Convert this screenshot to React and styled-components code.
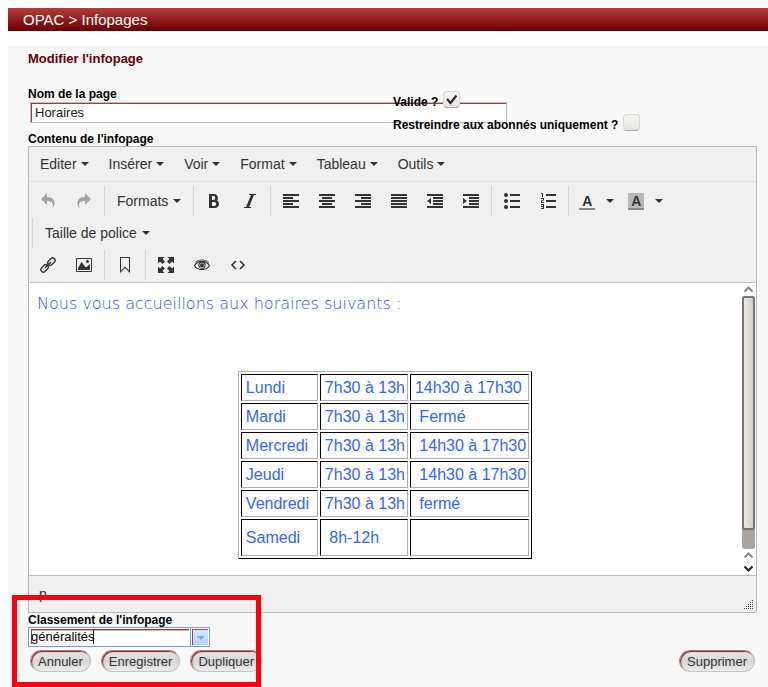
import React from "react";
import styled, { createGlobalStyle } from "styled-components";
import { ImBold, ImItalic, ImUndo2, ImRedo2, ImImage, ImListNumbered } from "react-icons/im";

const GlobalStyle = createGlobalStyle`
  * { box-sizing: border-box; }
  body {
    margin: 0;
    background: #fff;
    color: #000;
    font-family: "Liberation Sans", Arial, sans-serif;
    font-size: 13px;
  }
  button, input { font-family: inherit; }
`;

const Page = styled.div`
  position: relative;
  padding: 8px 0 0 8px;
`;

const TopBar = styled.header`
  height: 23px;
  padding-left: 15px;
  background: linear-gradient(#b43c3c, #6a0000);
  color: #fff;
  font-size: 15px;
  line-height: 23px;
`;

const Panel = styled.main`
  margin-top: 15px;
  padding: 4px 11px 16px 20px;
  background: #f8f8f8;
`;

const Title = styled.h1`
  margin: 0 0 20px;
  color: #6a0000;
  font-size: 13px;
  line-height: 17px;
`;

const FieldLabel = styled.label`
  display: block;
  font-size: 12px;
  font-weight: bold;
  line-height: 14px;
`;

const NameRow = styled.div`
  position: relative;
  margin-bottom: 9px;
`;

const NameInput = styled.input`
  display: block;
  width: 477px;
  height: 21px;
  margin: 1px 0 0 2px;
  padding: 0 4px;
  border: 1px solid #c0c0c0;
  box-shadow: inset 1px 1px 0 #9a3a3e;
  background: #fff;
  color: #222;
  font-size: 13px;
`;

const Options = styled.div`
  position: absolute;
  top: 4px;
  left: 365px;
  display: grid;
  gap: 5px;
`;

const Option = styled.label`
  display: flex;
  align-items: flex-end;
  gap: 5px;
  height: 18px;
  font-size: 12px;
  font-weight: bold;
  line-height: 14px;
`;

const CheckSlot = styled.span`
  display: grid;
  align-self: flex-start;

  > * { grid-area: 1 / 1; }
  svg { pointer-events: none; }
`;

const CheckInput = styled.input`
  appearance: none;
  width: 17px;
  height: 17px;
  margin: 0;
  border: 1px solid #d8d5d2;
  border-bottom-color: #aaa6a2;
  border-radius: 4px;
  background: linear-gradient(#f6f5f3, #e6e4e1);
`;

const Editor = styled.section`
  border: 1px solid #bbb;
  background: #f0f0f0;
  color: #333;
`;

const MenuBar = styled.div`
  display: flex;
  height: 35px;
  padding: 0 1px;
  border-bottom: 1px solid #e0e0e0;
`;

const TextButton = styled.button`
  display: flex;
  align-items: center;
  gap: 4px;
  padding: 0 10px;
  border: 0;
  background: none;
  color: #333;
  font-size: 14px;
  white-space: nowrap;
`;

const ToolTextButton = styled(TextButton)`
  gap: 5px;
`;

const ToolBars = styled.div`
  display: grid;
  gap: 2px;
  padding: 4px 1px 2px;
  border-bottom: 1px solid #c4c4c4;
`;

const ToolRow = styled.div`
  display: flex;
  height: 30px;
`;

const ToolGroup = styled.div`
  display: flex;
  ${(p) => p.$divided && "margin-left: 2px; padding-left: 2px; border-left: 1px solid #d6d6d6;"}
`;

const IconButton = styled.button`
  display: flex;
  align-items: center;
  justify-content: center;
  width: ${(p) => p.$width || 36}px;
  padding: 0;
  border: 0;
  background: none;
  color: #333;
  opacity: ${(p) => (p.disabled ? 0.4 : 1)};
`;

const Split = styled.div`
  display: flex;
  margin-right: 3px;
`;

const ColorLetter = styled.span`
  width: 16px;
  height: 17px;
  border-bottom: 2px solid #888;
  background: ${(p) => p.$fill};
  font-size: 14px;
  font-weight: bold;
  line-height: 16px;
  text-align: center;
`;

const EditArea = styled.div`
  display: flex;
  height: 292px;
  background: #fff;
`;

const Document = styled.div`
  flex: 1;
  min-width: 0;
  padding: 8px;
  color: #36f;
  outline: none;
`;

const Intro = styled.p`
  margin: 0 0 55px;
  color: #1f55ff;
  font-family: "DejaVu Sans Light", "DejaVu Sans", sans-serif;
  font-size: 16px;
  font-weight: 200;
  line-height: 25px;
`;

const Schedule = styled.table`
  margin: 0 auto;
  border: 1px solid;
  border-color: #b0b0b0 #000 #000 #b0b0b0;
  border-spacing: 2px;
  font-size: 16px;
  line-height: 17px;
`;

const Cell = styled.td`
  height: ${(p) => (p.$tall ? 37 : 27)}px;
  padding: 4px 2px 4px 4px;
  border: 1px solid;
  border-color: #000 #b0b0b0 #b0b0b0 #000;
  white-space: pre;
`;

const DayCell = styled(Cell)`
  width: 77px;
`;

const ScrollBar = styled.div`
  display: flex;
  flex-direction: column;
  align-items: center;
  width: 15px;
  flex: none;
`;

const ScrollTrack = styled.div`
  flex: 1;
  width: 13px;
  padding-bottom: 19px;
  border-radius: 3px;
  background: #aaa4a0;
`;

const ScrollThumb = styled.div`
  height: 100%;
  border: 2px solid #7a736f;
  border-radius: 3px;
  background: linear-gradient(90deg, #eae7e4, #d3cfcb);
`;

const StatusBar = styled.footer`
  display: flex;
  align-items: flex-end;
  justify-content: space-between;
  height: 37px;
  padding: 2px 2px 2px 10px;
  border-top: 1px solid #bbb;
  font-size: 14px;
`;

const PathName = styled.span`
  align-self: center;
`;

const Combo = styled.div`
  display: flex;
  width: 182px;
  height: 20px;
  border: 1px solid #7a9fc8;
  background: #fff;
`;

const ComboInput = styled.input`
  flex: 1;
  min-width: 0;
  margin: 1px 1px 2px 2px;
  padding: 0;
  border: 0;
  outline: none;
  box-shadow: inset 1px 1px 0 #8a3a3a, inset 0 2px 0 #dfb0b0;
  font-size: 13px;
`;

const ComboText = styled.div`
  position: relative;
  display: flex;
  flex: 1;
  min-width: 0;
`;

const TextCaret = styled.span`
  position: absolute;
  top: 2px;
  left: 64px;
  width: 1px;
  height: 14px;
  background: #000;
`;

const ComboButton = styled.button`
  display: flex;
  align-items: center;
  justify-content: center;
  width: 19px;
  padding: 1px;
  border: 0;
  border-left: 1px solid #7a9fc8;
  background: #fff;
`;

const ComboFace = styled.span`
  display: flex;
  align-items: center;
  justify-content: center;
  width: 100%;
  height: 100%;
  border: solid #8a4a56;
  border-width: 1px 0 0 1px;
  background: linear-gradient(#d4e8fd, #b0d4fa);
  color: #8aa4cc;
`;

const Actions = styled.div`
  display: flex;
  gap: 10px;
  margin: 3px 2px 0;
`;

const ActionButton = styled.button`
  height: 22px;
  padding: 0 7px;
  border: 1px solid #c4c4c4;
  border-top-color: #b07878;
  border-left-color: #b49090;
  border-radius: 11px;
  box-shadow: inset 1px 1px 1px #7a2020;
  background: linear-gradient(#e8e8e8, #d6d6d6 50%, #ececec);
  color: #333;
  font-size: 13px;
  margin-left: ${(p) => (p.$end ? "auto" : "0")};
`;

const Highlight = styled.div`
  position: absolute;
  bottom: 1px;
  left: 12px;
  width: 249px;
  height: 92px;
  border: 5px solid #ff0010;
  pointer-events: none;
`;

const Caret = () => (
  <svg width="8" height="4" viewBox="0 0 8 4" fill="currentColor" aria-hidden="true">
    <path d="M0 0h8L4 4z" />
  </svg>
);

const Glyph = ({ children }) => (
  <svg width="16" height="16" viewBox="0 0 16 16" fill="currentColor" aria-hidden="true">
    {children}
  </svg>
);

const Left = () => <Glyph><path d="M0 1h16v2H0zM0 4h10v2H0zM0 7h16v2H0zM0 10h10v2H0zM0 13h16v2H0z" /></Glyph>;
const Center = () => <Glyph><path d="M0 1h16v2H0zM3 4h10v2H3zM0 7h16v2H0zM3 10h10v2H3zM0 13h16v2H0z" /></Glyph>;
const Right = () => <Glyph><path d="M0 1h16v2H0zM6 4h10v2H6zM0 7h16v2H0zM6 10h10v2H6zM0 13h16v2H0z" /></Glyph>;
const Justify = () => <Glyph><path d="M0 1h16v2H0zM0 4h16v2H0zM0 7h16v2H0zM0 10h16v2H0zM0 13h16v2H0z" /></Glyph>;
const Outdent = () => <Glyph><path d="M0 1h16v2H0zM6 4h10v2H6zM6 7h10v2H6zM6 10h10v2H6zM0 13h16v2H0zM4 5v6L0 8z" /></Glyph>;
const Indent = () => <Glyph><path d="M0 1h16v2H0zM6 4h10v2H6zM6 7h10v2H6zM6 10h10v2H6zM0 13h16v2H0zM0 5v6l4-3z" /></Glyph>;
const Bullets = () => (
  <Glyph>
    <path d="M6 1h10v2H6zM6 7h10v2H6zM6 13h10v2H6z" />
    <circle cx="2" cy="2" r="2" /><circle cx="2" cy="8" r="2" /><circle cx="2" cy="14" r="2" />
  </Glyph>
);
const Bookmark = () => (
  <Glyph><path d="M3 0h10v16l-5-5-5 5zM4 1v12.6l4-4 4 4V1z" fillRule="evenodd" /></Glyph>
);
const Chain = () => (
  <Glyph>
    <g fill="none" stroke="currentColor" strokeWidth="1.4">
      <rect x="-4.1" y="-2.4" width="8.2" height="4.8" rx="2.2" transform="translate(4.6 11.4) rotate(-45)" />
      <rect x="-4.1" y="-2.4" width="8.2" height="4.8" rx="2.2" transform="translate(11.4 4.6) rotate(-45)" />
      <path d="M5.4 10.6l5.2-5.2" strokeLinecap="round" />
    </g>
  </Glyph>
);
const Fullscreen = () => (
  <Glyph>
    <path d="M0 0h6.5L4.5 2 7 4.5 4.5 7 2 4.500 0 6.500zM16 0v6.500l-2-2L11.500 7 9 4.500 11.500 2l-2-2zM0 16V9.500l2 2L4.500 9 7 11.500 4.500 14l2 2zM16 16H9.500l2-2L9 11.500 11.500 9l2.500 2.500 2-2z" />
  </Glyph>
);
const Eye = () => (
  <Glyph>
    <g fill="none" stroke="currentColor" strokeWidth="1.1">
      <path d="M0.500 8.500C2.200 5.800 4.900 4.400 8 4.400s5.800 1.400 7.500 4.100C13.800 11.300 11.100 12.600 8 12.600S2.200 11.300.500 8.500z" />
      <path d="M1 5.400C3 3.700 5.400 3 8 3s5 .7 7 2.400" strokeWidth="0.800" />
      <circle cx="8" cy="8.200" r="3.100" />
    </g>
    <circle cx="8" cy="8.200" r="2" />
  </Glyph>
);
const Code = () => (
  <Glyph><path d="M6 4L2 8l4 4M10 4l4 4-4 4" fill="none" stroke="currentColor" strokeWidth="1.600" /></Glyph>
);
const Tick = () => (
  <svg width="17" height="17" viewBox="0 0 17 17" aria-hidden="true">
    <path d="M4 8l3.500 4L13.500 4.500" fill="none" stroke="#2b2b2b" strokeWidth="2.200" />
  </svg>
);
const Chevron = ({ up, color }) => (
  <svg width="13" height="13" viewBox="0 0 13 13" aria-hidden="true">
    <path d={up ? "M2.500 8.500l4-4 4 4" : "M2.500 4.500l4 4 4-4"} fill="none" stroke={color} strokeWidth="2" />
  </svg>
);
const Grip = () => (
  <svg width="10" height="10" viewBox="0 0 10 10" fill="#444" aria-hidden="true">
    {[0, 1, 2, 3, 4].flatMap((r) =>
      Array.from({ length: r + 1 }, (_, i) => (
        <rect key={`${r}-${i}`} x={8 - i * 2} y={r * 2} width="1" height="1" />
      ))
    )}
  </svg>
);

const menus = ["Editer", "Insérer", "Voir", "Format", "Tableau", "Outils"];

const toolRows = [
  [
    [["Annuler la frappe", ImUndo2, true], ["Rétablir", ImRedo2, true]],
    ["Formats"],
    [["Gras", ImBold], ["Italique", ImItalic]],
    [["Gauche", Left], ["Centre", Center], ["Droite", Right], ["Justifier", Justify], ["Réduire le retrait", Outdent], ["Augmenter le retrait", Indent]],
    [["Puces", Bullets], ["Numéros", ImListNumbered]],
    [{ label: "Couleur du texte", fill: "transparent" }, { label: "Couleur de fond", fill: "#b8b8b8" }],
  ],
  ["Taille de police"].map((name) => [name]),
  [
    [["Lien", Chain], ["Image", ImImage]],
    [["Ancre", Bookmark]],
    [["Plein écran", Fullscreen], ["Prévisualiser", Eye], ["Code source", Code]],
  ],
];

const schedule = [
  ["Lundi", "7h30 à 13h", "14h30 à 17h30"],
  ["Mardi", "7h30 à 13h", "\u00a0Fermé"],
  ["Mercredi", "7h30 à 13h", "\u00a014h30 à 17h30"],
  ["Jeudi", "7h30 à 13h", "\u00a014h30 à 17h30"],
  ["Vendredi", "7h30 à 13h", "\u00a0fermé"],
  ["Samedi", "\u00a08h-12h", ""],
];

function Tool({ item }) {
  if (typeof item === "string") {
    return <ToolTextButton type="button">{item}<Caret /></ToolTextButton>;
  }
  if (Array.isArray(item)) {
    const [label, Icon, disabled] = item;
    return (
      <IconButton type="button" aria-label={label} disabled={disabled}>
        <Icon size={16} />
      </IconButton>
    );
  }
  return (
    <Split>
      <IconButton type="button" $width={32} aria-label={item.label}>
        <ColorLetter $fill={item.fill}>A</ColorLetter>
      </IconButton>
      <IconButton type="button" $width={14} aria-label={`${item.label} : choisir`}><Caret /></IconButton>
    </Split>
  );
}

function CheckOption({ label, checked }) {
  const [on, setOn] = React.useState(checked);
  return (
    <Option>
      {label}
      <CheckSlot>
        <CheckInput type="checkbox" checked={on} onChange={(e) => setOn(e.target.checked)} />
        {on && <Tick />}
      </CheckSlot>
    </Option>
  );
}

export default function App() {
  return (
    <>
      <GlobalStyle />
      <Page>
        <TopBar>OPAC &gt; Infopages</TopBar>
        <Panel>
          <Title>Modifier l'infopage</Title>
          <NameRow>
            <FieldLabel htmlFor="name">Nom de la page</FieldLabel>
            <NameInput id="name" defaultValue="Horaires" />
            <Options>
              <CheckOption label="Valide ?" checked />
              <CheckOption label="Restreindre aux abonnés uniquement ?" checked={false} />
            </Options>
          </NameRow>
          <FieldLabel as="div" id="content-label">Contenu de l'infopage</FieldLabel>
          <Editor>
            <MenuBar>
              {menus.map((m) => <TextButton key={m} type="button">{m}<Caret /></TextButton>)}
            </MenuBar>
            <ToolBars>
              {toolRows.map((groups, r) => (
                <ToolRow key={r}>
                  {groups.map((items, g) => (
                    <ToolGroup key={g} $divided={g > 0 || r === 1}>
                      {items.map((item, i) => <Tool key={i} item={item} />)}
                    </ToolGroup>
                  ))}
                </ToolRow>
              ))}
            </ToolBars>
            <EditArea>
              <Document role="textbox" aria-multiline="true" aria-labelledby="content-label" contentEditable suppressContentEditableWarning>
                <Intro>Nous vous accueillons aux horaires suivants :</Intro>
                <Schedule>
                  <tbody>
                    {schedule.map(([day, am, pm]) => (
                      <tr key={day}>
                        <DayCell $tall={!pm}>{day}</DayCell>
                        <Cell>{am}</Cell>
                        <Cell>{pm}</Cell>
                      </tr>
                    ))}
                  </tbody>
                </Schedule>
              </Document>
              <ScrollBar>
                <Chevron up color="#888" />
                <ScrollTrack><ScrollThumb /></ScrollTrack>
                <Chevron up color="#888" />
                <Chevron color="#222" />
              </ScrollBar>
            </EditArea>
            <StatusBar><PathName>p</PathName><Grip /></StatusBar>
          </Editor>
          <FieldLabel htmlFor="category">Classement de l'infopage</FieldLabel>
          <Combo>
            <ComboText>
              <ComboInput id="category" defaultValue="généralités" />
              <TextCaret />
            </ComboText>
            <ComboButton type="button" aria-label="Ouvrir la liste"><ComboFace><Caret /></ComboFace></ComboButton>
          </Combo>
          <Actions>
            <ActionButton type="button">Annuler</ActionButton>
            <ActionButton type="button">Enregistrer</ActionButton>
            <ActionButton type="button">Dupliquer</ActionButton>
            <ActionButton type="button" $end>Supprimer</ActionButton>
          </Actions>
        </Panel>
        <Highlight />
      </Page>
    </>
  );
}
